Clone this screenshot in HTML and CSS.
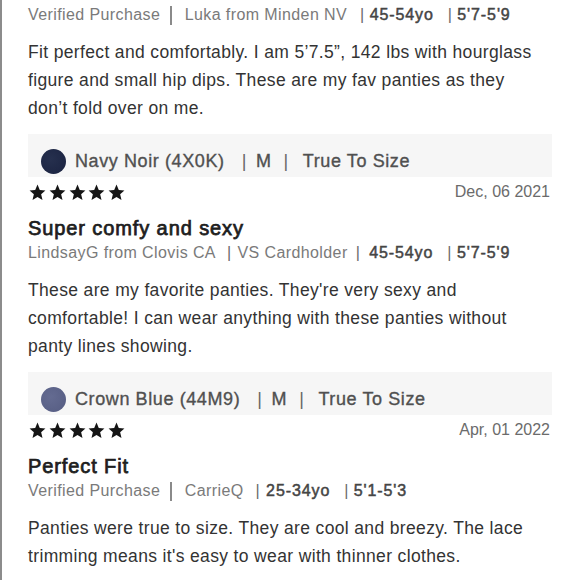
FILE: index.html
```html
<!DOCTYPE html>
<html lang="en">
<head>
<meta charset="utf-8">
<title>Reviews</title>
<link rel="stylesheet" href="styles.css">
</head>
<body>
<div class="feed">
  <section class="review review-first">
    <div class="meta"><span>Verified Purchase</span><span class="rule"></span><span>Luka from Minden NV</span><span class="pipe p1">|</span><b>45-54yo</b><span class="pipe p2">|</span><b>5'7-5'9</b></div>
    <p class="body">Fit perfect and comfortably. I am 5’7.5”, 142 lbs with hourglass figure and small hip dips. These are my fav panties as they don’t fold over on me.</p>
  </section>

  <section class="review">
    <div class="swatch-bar"><span class="swatch navy"></span><span class="opt">Navy Noir (4X0K)</span><span class="pipe s1">|</span><span class="opt">M</span><span class="pipe s2">|</span><span class="opt">True To Size</span></div>
    <div class="rating-row">
      <div class="stars">
        <svg viewBox="0 0 24 24"><path d="M12 2l2.9 6.9 7.1.6-5.4 4.7 1.7 7.3L12 17.6 5.7 21.5l1.7-7.3L2 9.5l7.1-.6z"/></svg>
        <svg viewBox="0 0 24 24"><path d="M12 2l2.9 6.9 7.1.6-5.4 4.7 1.7 7.3L12 17.6 5.7 21.5l1.7-7.3L2 9.5l7.1-.6z"/></svg>
        <svg viewBox="0 0 24 24"><path d="M12 2l2.9 6.9 7.1.6-5.4 4.7 1.7 7.3L12 17.6 5.7 21.5l1.7-7.3L2 9.5l7.1-.6z"/></svg>
        <svg viewBox="0 0 24 24"><path d="M12 2l2.9 6.9 7.1.6-5.4 4.7 1.7 7.3L12 17.6 5.7 21.5l1.7-7.3L2 9.5l7.1-.6z"/></svg>
        <svg viewBox="0 0 24 24"><path d="M12 2l2.9 6.9 7.1.6-5.4 4.7 1.7 7.3L12 17.6 5.7 21.5l1.7-7.3L2 9.5l7.1-.6z"/></svg>
      </div>
      <span class="date">Dec, 06 2021</span>
    </div>
    <h3 class="title">Super comfy and sexy</h3>
    <div class="meta"><span>LindsayG from Clovis CA</span><span class="pipe p3">|</span><span>VS Cardholder</span><span class="pipe p4">|</span><b>45-54yo</b><span class="pipe p2">|</span><b>5'7-5'9</b></div>
    <p class="body">These are my favorite panties. They're very sexy and comfortable! I can wear anything with these panties without panty lines showing.</p>
  </section>

  <section class="review">
    <div class="swatch-bar"><span class="swatch crown"></span><span class="opt">Crown Blue (44M9)</span><span class="pipe s1">|</span><span class="opt">M</span><span class="pipe s2">|</span><span class="opt">True To Size</span></div>
    <div class="rating-row">
      <div class="stars">
        <svg viewBox="0 0 24 24"><path d="M12 2l2.9 6.9 7.1.6-5.4 4.7 1.7 7.3L12 17.6 5.7 21.5l1.7-7.3L2 9.5l7.1-.6z"/></svg>
        <svg viewBox="0 0 24 24"><path d="M12 2l2.9 6.9 7.1.6-5.4 4.7 1.7 7.3L12 17.6 5.7 21.5l1.7-7.3L2 9.5l7.1-.6z"/></svg>
        <svg viewBox="0 0 24 24"><path d="M12 2l2.9 6.9 7.1.6-5.4 4.7 1.7 7.3L12 17.6 5.7 21.5l1.7-7.3L2 9.5l7.1-.6z"/></svg>
        <svg viewBox="0 0 24 24"><path d="M12 2l2.9 6.9 7.1.6-5.4 4.7 1.7 7.3L12 17.6 5.7 21.5l1.7-7.3L2 9.5l7.1-.6z"/></svg>
        <svg viewBox="0 0 24 24"><path d="M12 2l2.9 6.9 7.1.6-5.4 4.7 1.7 7.3L12 17.6 5.7 21.5l1.7-7.3L2 9.5l7.1-.6z"/></svg>
      </div>
      <span class="date">Apr, 01 2022</span>
    </div>
    <h3 class="title">Perfect Fit</h3>
    <div class="meta"><span>Verified Purchase</span><span class="rule"></span><span>CarrieQ</span><span class="pipe p5">|</span><b>25-34yo</b><span class="pipe p2">|</span><b>5'1-5'3</b></div>
    <p class="body">Panties were true to size. They are cool and breezy. The lace trimming means it's easy to wear with thinner clothes.</p>
  </section>
</div>
</body>
</html>
```

FILE: styles.css
```css
html, body {
  margin: 0;
  padding: 0;
  background: #ffffff;
}

body {
  font-family: "Liberation Sans", Arial, sans-serif;
  color: #333333;
}

.feed {
  min-height: 580px;
  box-sizing: border-box;
  border-left: 2px solid #8c8c8c;
  padding: 4px 28px 0 26px;
}

.review {
  padding-bottom: 12px;
}

.meta {
  display: flex;
  align-items: center;
  height: 22px;
  font-size: 16px;
  line-height: 22px;
  letter-spacing: 0.4px;
  color: #7a7a7a;
  white-space: nowrap;
}

.meta b {
  font-weight: 400;
  letter-spacing: 0.9px;
  color: #454545;
  -webkit-text-stroke: 0.5px #454545;
}

.rule {
  width: 1.5px;
  height: 19px;
  background: #8a8a8a;
  margin: 0 13px 0 10px;
}

.pipe {
  color: #6a6a6a;
}

.meta .p1 { margin: 0 5px 0 13px; }
.meta .p2 { margin: 0 5px 0 14px; }
.meta .p3 { margin: 0 6px 0 11px; }
.meta .p4 { margin: 0 9px 0 8px; }
.meta .p5 { margin: 0 6px 0 12px; }

.body {
  margin: 12px 12px 0 0;
  font-size: 17.5px;
  line-height: 28px;
  letter-spacing: 0.35px;
  color: #333333;
}

.swatch-bar {
  display: flex;
  align-items: center;
  height: 43px;
  box-sizing: border-box;
  padding: 11px 13px 0;
  background: #f6f6f6;
  font-size: 18px;
  letter-spacing: 0.6px;
  color: #505050;
  -webkit-text-stroke: 0.35px #505050;
  white-space: nowrap;
}

.swatch {
  width: 25px;
  height: 25px;
  border-radius: 50%;
  margin-right: 9px;
  flex: none;
}

.navy {
  background: radial-gradient(circle at 40% 40%, #26304e, #1a2240);
}

.crown {
  background: radial-gradient(circle at 40% 40%, #646b91, #555c82);
}

.swatch-bar .pipe {
  color: #666666;
  -webkit-text-stroke: 0;
}

.swatch-bar .s1 { margin: 0 9px 0 17px; }
.swatch-bar .s2 { margin: 0 14px 0 12px; }

.rating-row {
  display: flex;
  align-items: center;
  justify-content: space-between;
  height: 28px;
  margin-top: 1px;
}

.stars {
  display: flex;
  gap: 0.8px;
}

.stars svg {
  width: 19px;
  height: 19px;
  fill: #151515;
}

.date {
  font-size: 16px;
  color: #6b6b6b;
  margin-right: 2px;
}

.title {
  margin: 8px 0 0;
  font-size: 20px;
  line-height: 28px;
  font-weight: 400;
  letter-spacing: 0.9px;
  color: #1e1e1e;
  -webkit-text-stroke: 0.75px #1e1e1e;
}
```
